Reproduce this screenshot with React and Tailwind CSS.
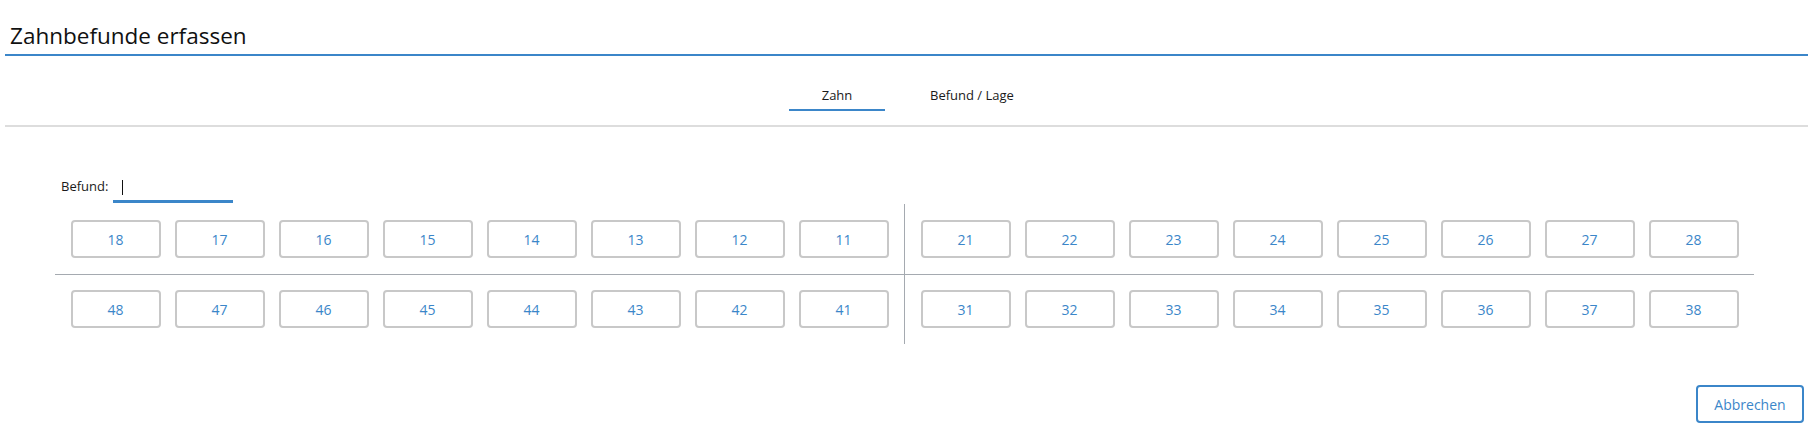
import React from "react";

const top = ["18", "17", "16", "15", "14", "13", "12", "11"];
const topR = ["21", "22", "23", "24", "25", "26", "27", "28"];
const bot = ["48", "47", "46", "45", "44", "43", "42", "41"];
const botR = ["31", "32", "33", "34", "35", "36", "37", "38"];

function Tooth({ n }) {
  return (
    <button className="w-[90px] h-[38px] border-2 border-[#c8c8c8] rounded-[4px] bg-white text-[#3b86c9] text-[14px] flex items-center justify-center">
      {n}
    </button>
  );
}

function Row({ items }) {
  return (
    <div className="flex justify-center gap-[14px]">
      {items.map((n) => (
        <Tooth key={n} n={n} />
      ))}
    </div>
  );
}

export default function App() {
  return (
    <div
      className="w-[1813px] h-[431px] bg-white overflow-hidden text-[#1a1a1a]"
      style={{ fontFamily: '"Open Sans", "Noto Sans", sans-serif' }}
    >
      <div className="px-[5px]">
        <div className="pt-[21px] pb-[3px] border-b-2 border-[#3b86c9]">
          <h1 className="pl-[5px] text-[22.5px] leading-[30px] font-normal text-[#111]">
            Zahnbefunde erfassen
          </h1>
        </div>
        <div className="border-b-2 border-[#dddddd] pt-[29px] pb-[14px]">
          <div className="flex pl-[784px] text-[13px]">
            <div className="w-[96px] text-center leading-[20px] pb-[4px] border-b-2 border-[#3b86c9]">
              Zahn
            </div>
            <div className="ml-[45px] leading-[20px] pb-[6px]">Befund / Lage</div>
          </div>
        </div>
      </div>

      <div className="flex items-start pl-[61px] mt-[51px]">
        <span className="text-[13px] leading-[18px] mt-[-1px]">Befund:</span>
        <div className="ml-[5px] w-[120px] h-[25px] border-b-[3px] border-[#3b86c9] relative">
          <div className="absolute left-[9px] top-[2px] w-px h-[15px] bg-[#111]" />
        </div>
      </div>

      <div className="ml-[55px] mt-[1px] w-[1699px] grid grid-cols-[850px_849px]">
        <div className="border-r border-b border-[#a5aab0] pt-[16px] pb-[16px]">
          <Row items={top} />
        </div>
        <div className="border-b border-[#a5aab0] pt-[16px] pb-[16px]">
          <Row items={topR} />
        </div>
        <div className="border-r border-[#a5aab0] pt-[15px] pb-[16px]">
          <Row items={bot} />
        </div>
        <div className="pt-[15px] pb-[16px]">
          <Row items={botR} />
        </div>
      </div>

      <div className="flex justify-end pr-[9px] mt-[41px]">
        <button className="w-[108px] h-[38px] border-2 border-[#3b86c9] rounded-[4px] bg-white text-[#3b86c9] text-[14px]">
          Abbrechen
        </button>
      </div>
    </div>
  );
}
